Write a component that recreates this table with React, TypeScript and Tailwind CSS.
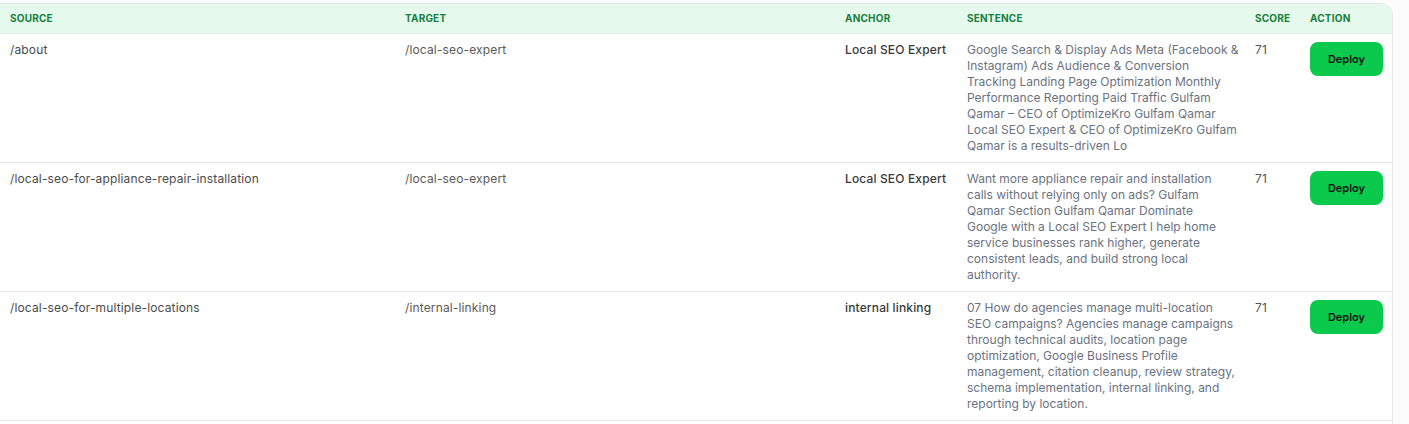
import React from 'react';

interface LinkRow {
  source: string;
  target: string;
  anchor: string;
  sentence: string[];
  score: number;
}

// sentence kept as the wrapped lines shown in the list
const rows: LinkRow[] = [
  {
    source: '/about',
    target: '/local-seo-expert',
    anchor: 'Local SEO Expert',
    sentence: [
      'Google Search & Display Ads Meta (Facebook &',
      'Instagram) Ads Audience & Conversion',
      'Tracking Landing Page Optimization Monthly',
      'Performance Reporting Paid Traffic Gulfam',
      'Qamar – CEO of OptimizeKro Gulfam Qamar',
      'Local SEO Expert & CEO of OptimizeKro Gulfam',
      'Qamar is a results-driven Lo',
    ],
    score: 71,
  },
  {
    source: '/local-seo-for-appliance-repair-installation',
    target: '/local-seo-expert',
    anchor: 'Local SEO Expert',
    sentence: [
      'Want more appliance repair and installation',
      'calls without relying only on ads? Gulfam',
      'Qamar Section Gulfam Qamar Dominate',
      'Google with a Local SEO Expert I help home',
      'service businesses rank higher, generate',
      'consistent leads, and build strong local',
      'authority.',
    ],
    score: 71,
  },
  {
    source: '/local-seo-for-multiple-locations',
    target: '/internal-linking',
    anchor: 'internal linking',
    sentence: [
      '07 How do agencies manage multi-location',
      'SEO campaigns? Agencies manage campaigns',
      'through technical audits, location page',
      'optimization, Google Business Profile',
      'management, citation cleanup, review strategy,',
      'schema implementation, internal linking, and',
      'reporting by location.',
    ],
    score: 71,
  },
];

const th = 'px-2.5 text-left align-middle text-[10px] font-bold uppercase tracking-[0.02em] text-[#15803d]';
const td = 'px-2.5 py-2 align-top text-[12px] leading-4 tracking-[0.012em]';

export default function App() {
  return (
    <div className="h-[424px] overflow-hidden bg-[#fcfcfc] pt-[3px] font-['Inter',sans-serif]">
      <div className="-ml-px h-[440px] w-[1394px] overflow-hidden rounded-tr-xl border border-[#e5e7eb] bg-white">
        <table className="w-full table-fixed border-collapse">
          <colgroup>
            <col className="w-[395px]" />
            <col className="w-[440px]" />
            <col className="w-[122px]" />
            <col className="w-[288px]" />
            <col className="w-[55px]" />
            <col />
          </colgroup>
          <thead>
            <tr className="h-[29px] border-b border-[#e3ece6] bg-[#e6f9ed]">
              <th className={th}>Source</th>
              <th className={th}>Target</th>
              <th className={th}>Anchor</th>
              <th className={th}>Sentence</th>
              <th className={th}>Score</th>
              <th className={th}>Action</th>
            </tr>
          </thead>
          <tbody>
            {rows.map((r) => (
              <tr key={r.source} className="border-b border-[#e5e7eb]">
                <td className={`${td} text-[#4b4b4b]`}>{r.source}</td>
                <td className={`${td} text-[#5a5a5a]`}>{r.target}</td>
                <td className={`${td} font-medium text-[#3a3a3a]`}>{r.anchor}</td>
                <td className={`${td} pr-1 tracking-normal text-[#6b7280]`}>
                  {r.sentence.map((line) => (
                    <span key={line} className="block whitespace-nowrap">
                      {line}
                    </span>
                  ))}
                </td>
                <td className={`${td} text-[#555]`}>{r.score}</td>
                <td className={td}>
                  <button
                    type="button"
                    className="h-[34px] w-[73px] rounded-lg bg-[#0ac94c] text-[11px] font-semibold tracking-normal text-[#111]"
                  >
                    Deploy
                  </button>
                </td>
              </tr>
            ))}
          </tbody>
        </table>
      </div>
    </div>
  );
}
